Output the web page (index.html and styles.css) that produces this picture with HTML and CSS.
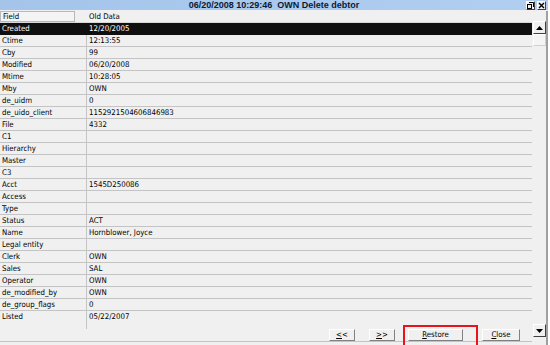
FILE: index.html
```html
<!DOCTYPE html>
<html lang="en">
<head>
    <meta charset="UTF-8">
    <title>06/20/2008 10:29:46 OWN Delete debtor</title>
    <link rel="stylesheet" href="styles.css">
</head>
<body>
    <div class="window">
        <div class="titlebar">
            <div class="title">06/20/2008 10:29:46&nbsp; OWN Delete debtor</div>
            <div class="title-btns">
                <span class="tbtn">
                    <svg width="7" height="7" viewBox="0 0 7 7"><rect x="0.5" y="2.5" width="4" height="4" fill="none" stroke="#000"/><path d="M2 0.5h4.5v4.5" fill="none" stroke="#000"/></svg>
                </span>
                <span class="tbtn">
                    <svg width="7" height="7" viewBox="0 0 7 7"><path d="M1 1L6 6M6 1L1 6" stroke="#000" stroke-width="1.4"/></svg>
                </span>
            </div>
        </div>

        <div class="main">
            <div class="grid">
                <div class="row head">
                    <div class="cell key"><span class="head-box">Field</span></div>
                    <div class="cell">Old Data</div>
                </div>
                <div id="rows"></div>
                <div class="footer">
                    <div class="filler"></div>
                    <div class="buttons">
                        <button class="btn prev"><u>&lt;</u>&lt;</button>
                        <button class="btn next"><u>&gt;</u>&gt;</button>
                        <button class="btn restore"><u>R</u>estore</button>
                        <button class="btn close"><u>C</u>lose</button>
                    </div>
                </div>
                <div class="highlight"></div>
            </div>
            <div class="scrollbar">
                <div class="sbtn">
                    <svg width="7" height="4" viewBox="0 0 7 4"><path d="M3.5 0L7 4H0z" fill="#000"/></svg>
                </div>
                <div class="thumb"></div>
                <div class="track"></div>
                <div class="sbtn">
                    <svg width="7" height="4" viewBox="0 0 7 4"><path d="M0 0H7L3.5 4z" fill="#000"/></svg>
                </div>
                <div class="grip"></div>
            </div>
        </div>
    </div>

    <script>
        const data = [
            ["Created", "12/20/2005"],
            ["Ctime", "12:13:55"],
            ["Cby", "99"],
            ["Modified", "06/20/2008"],
            ["Mtime", "10:28:05"],
            ["Mby", "OWN"],
            ["de_uidm", "0"],
            ["de_uido_client", "1152921504606846983"],
            ["File", "4332"],
            ["C1", ""],
            ["Hierarchy", ""],
            ["Master", ""],
            ["C3", ""],
            ["Acct", "1545D250086"],
            ["Access", ""],
            ["Type", ""],
            ["Status", "ACT"],
            ["Name", "Hornblower, Joyce"],
            ["Legal entity", ""],
            ["Clerk", "OWN"],
            ["Sales", "SAL"],
            ["Operator", "OWN"],
            ["de_modified_by", "OWN"],
            ["de_group_flags", "0"],
            ["Listed", "05/22/2007"]
        ];

        const rows = document.getElementById("rows");
        data.forEach(([field, value], index) => {
            const row = document.createElement("div");
            row.className = "row";
            if (index === 0) row.classList.add("selected");
            if (index === data.length - 1) row.classList.add("last");
            row.innerHTML = `<div class="cell key">${field}</div><div class="cell">${value}</div>`;
            rows.appendChild(row);
        });
    </script>
</body>
</html>
```

FILE: styles.css
```css
body {
    margin: 0;
    background: #f0f0f0;
    font-family: 'DejaVu Sans Condensed', 'DejaVu Sans', sans-serif;
    font-stretch: condensed;
    font-size: 7.8px;
    color: #000;
    overflow: hidden;
}
.window {
    width: 550px;
    height: 345px;
    display: flex;
    flex-direction: column;
    box-sizing: border-box;
    border-right: 2px solid #fff;
}
.titlebar {
    height: 10px;
    background: linear-gradient(90deg, #a4c4ea, #b0cff0);
    display: flex;
    align-items: center;
}
.title {
    flex: 1;
    text-align: center;
    font-family: 'Liberation Sans', Arial, sans-serif;
    font-stretch: normal;
    font-weight: bold;
    font-size: 9px;
    line-height: 10px;
    color: #0c1a33;
    padding-left: 22px;
}
.title-btns {
    display: flex;
    gap: 2px;
    padding-right: 2px;
}
.tbtn {
    width: 9px;
    height: 9px;
    background: #f0f0f0;
    border: 1px solid #fff;
    border-right-color: #404040;
    border-bottom-color: #404040;
    box-sizing: border-box;
    display: flex;
    align-items: center;
    justify-content: center;
}
.main {
    flex: 1;
    display: flex;
    padding-top: 1px;
}
.grid {
    width: 532px;
    display: flex;
    flex-direction: column;
    position: relative;
}
.row {
    display: grid;
    grid-template-columns: 87px 1fr;
    height: 12px;
    line-height: 11px;
    border-bottom: 1px solid #c4c4c4;
    box-sizing: border-box;
}
.cell {
    padding-left: 2px;
    white-space: nowrap;
    overflow: hidden;
}
.cell.key {
    border-right: 1px solid #c4c4c4;
}
.row.head .cell.key {
    border-right: none;
    padding-left: 0;
}
.head-box {
    display: block;
    width: 75px;
    height: 11px;
    box-sizing: border-box;
    border: 1px solid #fff;
    border-right-color: #8c8c8c;
    border-bottom-color: #8c8c8c;
    outline: 1px solid #b8b8b8;
    outline-offset: -1px;
    padding-left: 2px;
    line-height: 9px;
    background: #f4f4f4;
}
.row.head {
    border-bottom-color: #d8d8d8;
}
.row.selected {
    background: #101010;
    color: #fff;
    border-bottom-color: #101010;
}
.row.selected .cell.key {
    border-right-color: #101010;
}
.row.last {
    border-bottom: none;
}
.footer {
    flex: 1;
    display: flex;
    flex-direction: column;
    border-bottom: 1px solid #c4c4c4;
    margin-bottom: 3px;
}
.filler {
    width: 87px;
    height: 6px;
    border-right: 1px solid #c4c4c4;
    box-sizing: border-box;
}
.buttons {
    display: flex;
    justify-content: flex-end;
    padding-right: 12px;
}
.btn {
    height: 12px;
    padding: 0;
    font-family: inherit;
    font-stretch: condensed;
    font-size: 7.8px;
    line-height: 10px;
    background: #f0f0f0;
    color: #000;
    border: 1px solid #fff;
    border-right-color: #808080;
    border-bottom-color: #808080;
    box-sizing: border-box;
}
.btn.prev {
    width: 26px;
}
.btn.next {
    width: 26px;
    margin-left: 14px;
}
.btn.restore {
    width: 55px;
    margin-left: 13px;
}
.btn.close {
    width: 38px;
    margin-left: 19px;
}
.highlight {
    position: absolute;
    left: 403px;
    top: 314px;
    width: 75px;
    height: 31px;
    border: 2px solid #e8141c;
    box-sizing: border-box;
}
.scrollbar {
    width: 16px;
    display: flex;
    flex-direction: column;
    align-items: center;
    padding-top: 10px;
    border-right: 2px solid #a0a0a0;
    box-sizing: border-box;
}
.sbtn {
    width: 13px;
    height: 13px;
    background: #f0f0f0;
    border: 1px solid #fff;
    border-right-color: #404040;
    border-bottom-color: #404040;
    box-sizing: border-box;
    display: flex;
    align-items: center;
    justify-content: center;
}
.thumb {
    width: 13px;
    height: 12px;
    background: #f4f4f4;
    border: 1px solid #fff;
    border-right-color: #d0d0d0;
    border-bottom-color: #d0d0d0;
    box-sizing: border-box;
}
.track {
    flex: 1;
}
.grip {
    height: 8px;
}
```
